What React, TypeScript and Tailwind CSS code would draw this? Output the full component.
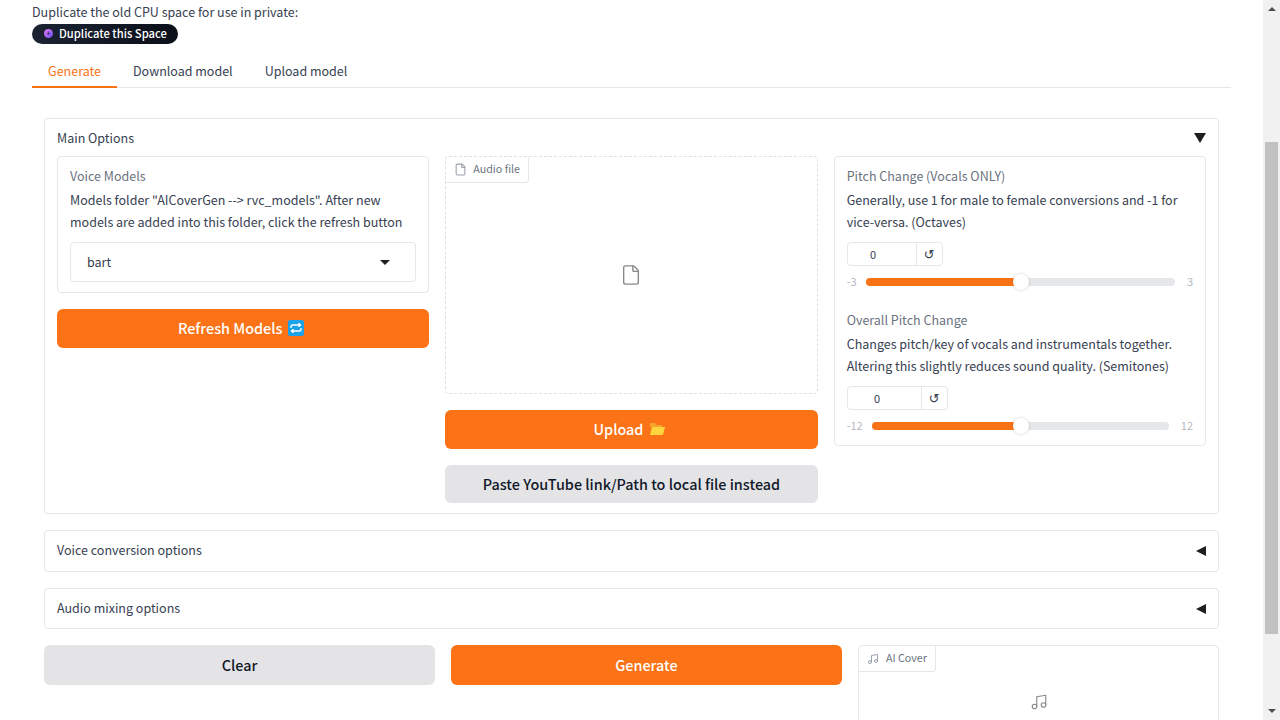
import { File, Music } from "lucide-react";

const font = "font-['Noto_Sans_CJK_SC','Noto_Sans',sans-serif]";

interface SliderProps {
  label: string;
  info: string[];
  min: string;
  max: string;
  inputWidth: string;
  percent: number;
}

const SliderBlock = ({ label, info, min, max, inputWidth, percent }: SliderProps) => {
  return (
    <div className="flex flex-col">
      <div className="text-[12.5px] leading-[22px] text-[#6b7280] mb-[2px]">{label}</div>
      {info.map((line) => (
        <div key={line} className="text-[12.5px] leading-[22px] text-[#374151] whitespace-nowrap">
          {line}
        </div>
      ))}
      <div className="flex mt-[9px] h-[24px] w-fit border border-[#e5e7eb] rounded-[4px] text-[#374151]">
        <div className={`${inputWidth} text-center text-[11px] leading-[22px] border-r border-[#e5e7eb]`}>0</div>
        <div className="w-[25px] flex items-center justify-center text-[13px] leading-none text-[#374151] font-['DejaVu_Sans',sans-serif]">↺</div>
      </div>
      <div className="flex items-center mt-[7px] h-[18px] text-[11px] text-[#b5b9c1]">
        <span className="w-[10px] pb-[2px] whitespace-nowrap">{min}</span>
        <div className={`relative flex-1 h-[8px] rounded-full bg-[#e5e7eb] ${max === "3" ? "ml-[9px] mr-[12px]" : "ml-[15px] mr-[12px]"}`}>
          <div className="h-full rounded-full bg-[#f97316]" style={{ width: `${percent}%` }} />
          <div
            className="absolute top-1/2 -translate-x-1/2 -translate-y-1/2 w-[16px] h-[16px] rounded-full bg-white shadow-[0_0_3px_rgba(0,0,0,0.2)]"
            style={{ left: `${percent}%` }}
          />
        </div>
        <span className="pb-[2px] whitespace-nowrap">{max}</span>
      </div>
    </div>
  );
};

const CollapsedRow = ({ label, tall }: { label: string; tall: boolean }) => {
  return (
    <div className={`flex items-center justify-between ${tall ? "h-[42px]" : "h-[41px]"} px-3 border border-[#e5e7eb] rounded-[4px]`}>
      <span className={`text-[12.5px] text-[#374151] ${tall ? "pb-[2px]" : ""}`}>{label}</span>
      <span className="w-0 h-0 border-y-[5px] border-y-transparent border-r-[10px] border-r-[#1f1f1f]" />
    </div>
  );
};

const OrangeButton = ({ children, className }: { children: React.ReactNode; className: string }) => (
  <div className={`flex items-center justify-center gap-[6px] bg-[#fb7316] rounded-[6px] text-white font-medium text-[14.4px] ${className}`}>
    {children}
  </div>
);

export default function App() {
  return (
    <div className={`flex h-screen overflow-hidden bg-white ${font}`}>
      <main className="flex-1 min-w-0 pl-[32px] pr-[32px] pt-[2px]">
        <div className="text-[12.5px] leading-[20px] text-[#374151]">Duplicate the old CPU space for use in private:</div>
        <div className="mt-[2px] flex items-center w-[146px] h-[20px] pl-[12px] pb-[1px] rounded-full bg-gradient-to-r from-[#1b2333] to-[#0b0f19] text-white text-[11.200px] font-medium">
          <span className="w-[9px] h-[9px] rounded-full bg-gradient-to-br from-[#e879f9] to-[#6d4aed] mr-[6px] flex items-center justify-center text-[7px] leading-none text-[#1b2333]">+</span>
          Duplicate this Space
        </div>

        <div className="flex mt-[10px] h-[34px] border-b border-[#e5e7eb] text-[12.5px] text-[#374151]">
          <div className="w-[85px] h-[34px] text-center leading-[34px] text-[#f97316] border-b-2 border-[#f97316]">Generate</div>
          <div className="px-[16px] leading-[34px]">Download model</div>
          <div className="px-[16px] leading-[34px]">Upload model</div>
        </div>

        <div className="mx-[12px] mt-[30px] flex flex-col">
          <section className="h-[396px] border border-[#e5e7eb] rounded-[4px] px-3">
            <div className="flex items-center justify-between h-[37px]">
              <span className="text-[12.5px] text-[#374151] pt-[2px]">Main Options</span>
              <span className="w-0 h-0 border-x-[6px] border-x-transparent border-t-[10px] border-t-[#1f1f1f]" />
            </div>
            <div className="grid grid-cols-3 gap-[16px] items-start">
              <div className="flex flex-col gap-[16px]">
                <div className="h-[137px] border border-[#e5e7eb] rounded-[4px] px-3 pt-[8px]">
                  <div className="text-[12.5px] leading-[22px] text-[#6b7280] mb-[2px]">Voice Models</div>
                  <div className="text-[12.5px] leading-[22px] text-[#374151] whitespace-nowrap">Models folder "AICoverGen --&gt; rvc_models". After new</div>
                  <div className="text-[12.5px] leading-[22px] text-[#374151] whitespace-nowrap">models are added into this folder, click the refresh button</div>
                  <div className="flex items-center justify-between mt-[9px] h-[40px] px-[16px] border border-[#e5e7eb] rounded-[4px] text-[12.5px] text-[#374151]">
                    bart
                    <span className="w-0 h-0 mr-[9px] border-x-[5px] border-x-transparent border-t-[5px] border-t-[#1f1f1f]" />
                  </div>
                </div>
                <OrangeButton className="h-[39px] pr-[4px] pb-[2px]">
                  Refresh Models
                  <svg width="16" height="16" viewBox="0 0 16 16">
                    <rect width="16" height="16" rx="2" fill="#1da1e8" />
                    <path d="M3 8V6.500A1.500 1.500 0 0 1 4.500 5H12M10.500 3.300 12.500 5 10.500 6.700M13 8v1.500A1.500 1.500 0 0 1 11.500 11H4M5.500 9.300 3.500 11 5.500 12.700" fill="none" stroke="#fff" strokeWidth="1.400" />
                  </svg>
                </OrangeButton>
              </div>

              <div className="flex flex-col gap-[16px]">
                <div className="relative h-[238px] border border-dashed border-[#e0e0e0] rounded-[4px] flex items-center justify-center">
                  <div className="absolute left-0 top-0 h-[26px] flex items-center gap-[6px] pl-[8px] pr-[8px] border-r border-b border-[#e5e7eb] rounded-br-[4px] text-[10.700px] text-[#6b7280]">
                    <File size={13} className="text-[#9ca3af]" />
                    Audio file
                  </div>
                  <File size={22} strokeWidth={1.500} className="text-[#888]" />
                </div>
                <OrangeButton className="h-[39px] pr-[4px] pb-[2px]">
                  Upload
                  <svg width="16" height="14" viewBox="0 0 16 14">
                    <path d="M1 1h5l1.500 2H13v2H1z" fill="#f4a52d" />
                    <path d="M3 5h13l-2 8H1z" fill="#ffd53d" />
                  </svg>
                </OrangeButton>
                <div className="h-[38px] flex items-center justify-center rounded-[6px] bg-[#e4e4e7] text-[14.4px] font-medium text-[#111827]">
                  Paste YouTube link/Path to local file instead
                </div>
              </div>

              <div className="border border-[#e5e7eb] rounded-[4px] px-3 pt-[8px] pb-[10px] flex flex-col gap-[18px]">
                <SliderBlock
                  label="Pitch Change (Vocals ONLY)"
                  info={["Generally, use 1 for male to female conversions and -1 for", "vice-versa. (Octaves)"]}
                  min="-3"
                  max="3"
                  inputWidth="w-[69px] pr-[17px]"
                  percent={50.2}
                />
                <SliderBlock
                  label="Overall Pitch Change"
                  info={["Changes pitch/key of vocals and instrumentals together.", "Altering this slightly reduces sound quality. (Semitones)"]}
                  min="-12"
                  max="12"
                  inputWidth="w-[74px] pr-[14px]"
                  percent={50.2}
                />
              </div>
            </div>
          </section>

          <div className="mt-[16px] flex flex-col gap-[16px]">
            <CollapsedRow label="Voice conversion options" tall />
            <CollapsedRow label="Audio mixing options" tall={false} />
          </div>

          <div className="mt-[16px] grid grid-cols-[391px_391px_1fr] gap-[16px] items-start">
            <div className="h-[40px] flex items-center justify-center rounded-[6px] bg-[#e4e4e7] text-[14.4px] font-medium text-[#111827]">Clear</div>
            <OrangeButton className="h-[40px]">Generate</OrangeButton>
            <div className="relative h-[120px] border border-[#e5e7eb] rounded-[4px] flex justify-center pt-[47px]">
              <div className="absolute left-0 top-0 h-[26px] flex items-center gap-[7px] pl-[8px] pr-[8px] border-r border-b border-[#e5e7eb] rounded-br-[4px] text-[10.700px] text-[#6b7280]">
                <Music size={12} className="text-[#9ca3af]" />
                AI Cover
              </div>
              <Music size={18} strokeWidth={1.500} className="text-[#888]" />
            </div>
          </div>
        </div>
      </main>

      <div className="w-[17px] shrink-0 h-full bg-[#f1f1f1] flex flex-col">
        <div className="h-[142px] flex justify-center pt-[7px]">
          <span className="w-0 h-0 border-x-[4px] border-x-transparent border-b-[4px] border-b-[#505050]" />
        </div>
        <div className="h-[492px] mx-[2px] bg-[#c1c1c1]" />
        <div className="flex-1 flex items-end justify-center pb-[7px]">
          <span className="w-0 h-0 border-x-[4px] border-x-transparent border-t-[4px] border-t-[#505050]" />
        </div>
      </div>
    </div>
  );
}
